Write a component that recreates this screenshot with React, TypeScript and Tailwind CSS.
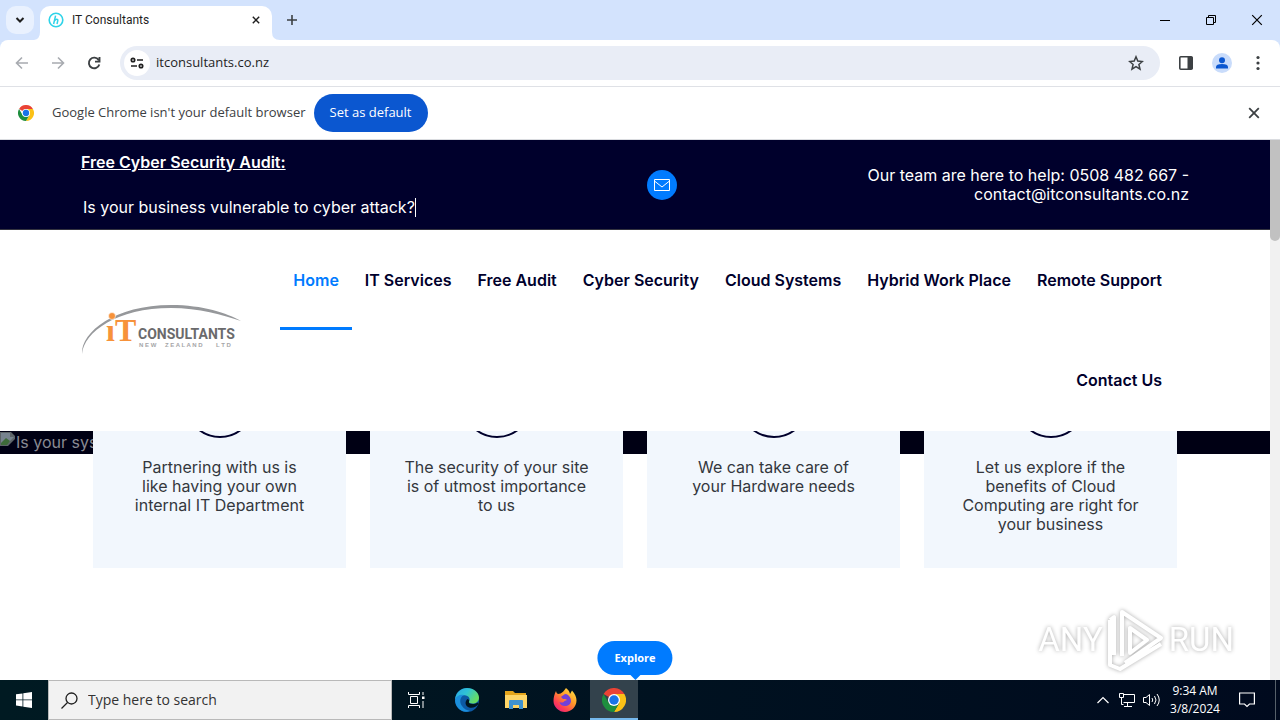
import { useState } from "react";

const siteFont = "font-[Inter,'Liberation_Sans',sans-serif]";
const uiFont = "font-['Open_Sans','Noto_Sans',sans-serif]";

const navLinks = [
  "Home",
  "IT Services",
  "Free Audit",
  "Cyber Security",
  "Cloud Systems",
  "Hybrid Work Place",
  "Remote Support",
  "Contact Us",
];

const cards = [
  "Partnering with us is\nlike having your own\ninternal IT Department",
  "The security of your site\nis of utmost importance\nto us",
  "We can take care of\nyour Hardware needs",
  "Let us explore if the\nbenefits of Cloud\nComputing are right for\nyour business",
];

const ChromeLogo = ({ className }: { className?: string }) => (
  <svg viewBox="0 0 48 48" className={className} aria-hidden="true">
    <path d="M24 24 3.2 12A24 24 0 0 1 44.8 12Z" fill="#ea4335" />
    <path d="M24 12H44.8A24 24 0 0 1 24 48L34.4 30Z" fill="#fbc116" />
    <path d="M3.2 12 13.6 30 24 36 34.4 30 24 48A24 24 0 0 1 3.2 12Z" fill="#1e8e3e" />
    <circle cx="24" cy="24" r="12" fill="#fff" />
    <circle cx="24" cy="24" r="9.5" fill="#1a73e8" />
  </svg>
);

const CloseIcon = ({ className }: { className?: string }) => (
  <svg viewBox="0 0 10 10" className={className} fill="none" stroke="currentColor" aria-hidden="true">
    <path d="m1 1 8 8M9 1 1 9" />
  </svg>
);

const TabStrip = () => (
  <div className="flex h-10 shrink-0 items-end bg-[#d3e3fd]">
    <button aria-label="Search tabs" className="mb-1.5 ml-1.5 flex size-7 items-center justify-center rounded-[10px] bg-[#e9f1fe]">
      <svg viewBox="0 0 10 10" className="size-2.5" fill="none" stroke="#1f1f1f" strokeWidth="2" aria-hidden="true">
        <path d="m1.5 3 3.5 3.5L8.5 3" />
      </svg>
    </button>
    <svg viewBox="0 0 6 8" className="h-2 w-1.5" fill="#fff" aria-hidden="true">
      <path d="M6 0v8H0q6-1 6-8" />
    </svg>
    <div className="flex h-[34px] w-[232px] items-center rounded-t-[10px] bg-white pr-2.5 pl-2 pb-1.5">
      <svg viewBox="0 0 16 16" className="size-4" fill="none" stroke="#2fd3e8" aria-hidden="true">
        <circle cx="8" cy="8" r="6.8" strokeWidth="1.6" />
        <path d="M7.6 3.6 5.6 12M6.4 9c1-2 3.8-2.6 3.4-.4L9 12" strokeWidth="1.5" />
      </svg>
      <span className="ml-2 flex-1 font-[Roboto,sans-serif] text-xs text-[#1f1f1f]">IT Consultants</span>
      <button aria-label="Close tab" className="p-0.5 text-[#1f1f1f]">
        <CloseIcon className="size-2 stroke-[1.8]" />
      </button>
    </div>
    <svg viewBox="0 0 8 8" className="size-2" fill="#fff" aria-hidden="true">
      <path d="M0 0v8h8Q0 8 0 0" />
    </svg>
    <button aria-label="New tab" className="mb-3.5 ml-1.5">
      <svg viewBox="0 0 12 12" className="size-3" stroke="#3c4043" strokeWidth="1.6" aria-hidden="true">
        <path d="M6 1v10M1 6h10" />
      </svg>
    </button>
    <div className="ml-auto flex h-10 items-center text-black">
      <button aria-label="Minimize" className="flex w-[46px] justify-center">
        <svg viewBox="0 0 10 10" className="size-2.5" stroke="currentColor" shapeRendering="crispEdges" aria-hidden="true">
          <path d="M0 5.5h10" />
        </svg>
      </button>
      <button aria-label="Restore" className="flex w-[46px] justify-center">
        <svg viewBox="0 0 10 10" className="size-2.5" fill="none" stroke="currentColor" aria-hidden="true">
          <path d="M.5 2.5h7v7h-7zM2.5 2.5v-2h7v7h-2" />
        </svg>
      </button>
      <button aria-label="Close" className="flex w-[46px] justify-center">
        <CloseIcon className="size-3 stroke-1" />
      </button>
    </div>
  </div>
);

const Toolbar = () => (
  <div className="bg-[#d3e3fd]">
    <div className="flex h-[47px] items-center rounded-t-lg border-b border-[#dfe1e6] bg-white pl-[15px] pr-3">
      <button aria-label="Back">
        <svg viewBox="0 0 14 14" className="size-3.5" fill="none" stroke="#a8abb0" strokeWidth="1.6" aria-hidden="true">
          <path d="M13 7H2M7 1.5 1.5 7 7 12.5" />
        </svg>
      </button>
      <button aria-label="Forward" className="ml-[22px]">
        <svg viewBox="0 0 14 14" className="size-3.5" fill="none" stroke="#a8abb0" strokeWidth="1.6" aria-hidden="true">
          <path d="M1 7h11M7 1.5 12.5 7 7 12.5" />
        </svg>
      </button>
      <button aria-label="Reload" className="ml-[22px]">
        <svg viewBox="0 0 14 14" className="size-3.5" fill="none" stroke="#3c4043" strokeWidth="1.9" aria-hidden="true">
          <path d="M11.6 4A5.3 5.3 0 1 0 12.3 8.4M12.5 1v4.6H8" />
        </svg>
      </button>
      <div className="ml-[19px] flex h-[34px] flex-1 items-center rounded-full bg-[#e9edf6] pr-4 pl-1">
        <button aria-label="View site information" className="flex size-[26px] items-center justify-center rounded-full bg-white">
          <svg viewBox="0 0 14 12" className="h-3 w-3.5" fill="none" stroke="#1f1f1f" strokeWidth="1.7" aria-hidden="true">
            <circle cx="3" cy="3" r="1.7" />
            <path d="M7 3h6M1 9h6" />
            <circle cx="11" cy="9" r="1.7" />
          </svg>
        </button>
        <input aria-label="Address" defaultValue="itconsultants.co.nz" className="ml-1.5 min-w-0 flex-1 bg-transparent text-[13px] text-[#1f1f1f] outline-none" />
        <button aria-label="Bookmark this tab">
          <svg viewBox="0 0 16 16" className="size-4" fill="none" stroke="#3c4043" strokeWidth="1.5" aria-hidden="true">
            <path d="m8 1.8 1.8 4.3 4.6.4-3.5 3 1.1 4.6L8 11.6l-4 2.5 1.1-4.6-3.5-3 4.6-.4z" />
          </svg>
        </button>
      </div>
      <button aria-label="Side panel" className="ml-[19px]">
        <svg viewBox="0 0 14 14" className="size-3.5" aria-hidden="true">
          <rect x=".8" y=".8" width="12.4" height="12.4" rx="1" fill="none" stroke="#3c4043" strokeWidth="1.6" />
          <path d="M8.5 1h5v12h-5z" fill="#3c4043" />
        </svg>
      </button>
      <button aria-label="Profile" className="ml-[19px]">
        <svg viewBox="0 0 20 20" className="size-5" aria-hidden="true">
          <circle cx="10" cy="10" r="10" fill="#c9dcfb" />
          <circle cx="10" cy="7.2" r="3" fill="#0b57d0" />
          <path d="M4 15.5V14q0-3 6-3t6 3v1.5z" fill="#0b57d0" />
        </svg>
      </button>
      <button aria-label="Menu" className="ml-4">
        <svg viewBox="0 0 20 20" className="size-5" fill="#3c4043" aria-hidden="true">
          <circle cx="10" cy="4.5" r="1.6" />
          <circle cx="10" cy="10" r="1.6" />
          <circle cx="10" cy="15.5" r="1.6" />
        </svg>
      </button>
    </div>
  </div>
);

const InfoBar = () => (
  <div className="flex h-[53px] shrink-0 items-center border-b border-[#dadce0] bg-white pr-5 pl-[18px]">
    <ChromeLogo className="size-4" />
    <span className="ml-[18px] text-[13px] text-[#3c4043]">Google Chrome isn't your default browser</span>
    <button className="ml-2 h-[38px] rounded-full bg-[#0b57d0] px-4 text-[13px] text-white">Set as default</button>
    <button aria-label="Dismiss" className="ml-auto text-[#3c4043]">
      <CloseIcon className="size-3 stroke-[1.5]" />
    </button>
  </div>
);

const TopBar = () => (
  <div className="border-b border-[#33333f] bg-[#00002c] text-white">
    <div className="mx-auto flex h-[89px] max-w-[1108px] items-center justify-between">
      <div className="flex w-[396px] flex-col gap-[26px] leading-[19px]">
        <a href="#audit" className="font-semibold underline">Free Cyber Security Audit:</a>
        <p className="flex pl-0.5">
          Is your business vulnerable to cyber attack?
          <span className="w-px bg-white" />
        </p>
      </div>
      <a href="#mail" aria-label="Email us" className="flex size-[30px] items-center justify-center rounded-full bg-[#007bff]">
        <svg viewBox="0 0 16 12" className="h-3 w-4" fill="none" stroke="#fff" aria-hidden="true">
          <path d="M.5.5h15v11H.5zM.5 2 8 8l7.5-6" />
        </svg>
      </a>
      <p className="w-[342px] text-right leading-[19px]">
        Our team are here to help: 0508 482 667 -<br />
        contact@itconsultants.co.nz
      </p>
    </div>
  </div>
);

const Logo = () => (
  <svg viewBox="0 0 162 52" className="h-[52px] w-[162px] shrink-0" role="img" aria-label="iT Consultants New Zealand Ltd">
    <path d="M1 50C0 28 34 1 90 1c32 0 56 8 70 16C142 11 118 4 90 4 36 4 3 28 1 50" fill="#96989b" />
    <g className="font-['Liberation_Serif',serif]" fontSize="32" fontWeight="700" fill="#f7923a">
      <text x="25" y="37">ı</text>
      <text x="34" y="37">T</text>
    </g>
    <circle cx="31" cy="12" r="3.5" fill="#f7923a" stroke="#fff" strokeWidth=".6" />
    <text x="57" y="35" fontSize="14" fontWeight="700" fill="#6a6a6c" className="font-[Roboto,sans-serif]">CONSULTANTS</text>
    <g className="font-['Liberation_Sans',sans-serif]" fontSize="6" fontWeight="700" fill="#a5a5a7">
      <text x="58" y="43">N E W</text>
      <text x="84" y="43">Z E A L A N D</text>
      <text x="135" y="43">L T D</text>
    </g>
  </svg>
);

const Header = () => {
  const [active, setActive] = useState("Home");
  return (
    <header className="bg-white">
      <div className="mx-auto flex max-w-[1108px] items-center justify-between pb-px">
        <Logo />
        <nav className="flex flex-1 flex-wrap justify-end pr-3.5">
          {navLinks.map((link) => (
            <a
              key={link}
              href="#page"
              onClick={() => setActive(link)}
              className={`flex h-[100px] items-center border-b-[3px] px-[13px] pt-[3px] font-semibold ${
                active === link ? "border-[#007bff] text-[#007bff]" : "border-transparent text-[#00002c]"
              }`}
            >
              {link}
            </a>
          ))}
        </nav>
      </div>
    </header>
  );
};

const Services = () => (
  <main>
    <div className="flex h-[23px] items-start overflow-hidden bg-[#000014] text-[#8a8a92]">
      <svg viewBox="0 0 16 16" className="size-4" aria-hidden="true">
        <path d="M0 1h11l4 4v3l-7 7H0z" fill="#5d6468" />
        <path d="M1 2h9v4h4L7 13H1z" fill="#77838f" />
        <path d="m1 12 5-5 4 3-3 4H1z" fill="#3e6b3a" />
      </svg>
      <span className="leading-[22px]">Is your system secure?</span>
    </div>
    <div className="relative mx-auto -mt-[23px] grid max-w-[1108px] grid-cols-4 gap-6 px-3">
      {cards.map((text) => (
        <article key={text} className="overflow-hidden bg-[#f2f7fd] pb-[34px] text-center">
          <div className="mx-auto -mt-[63px] size-[70px] rounded-full border-2 border-[#00002c]" />
          <p className="mt-5 whitespace-pre-line leading-[19px] text-[#34373d]">{text}</p>
        </article>
      ))}
    </div>
  </main>
);

const Watermark = () => (
  <div className="absolute right-9 bottom-2 flex items-center gap-1 font-[Roboto,sans-serif] text-[33px] text-white drop-shadow-[0_0_2px_#aaa]">
    <span>ANY</span>
    <svg viewBox="0 0 58 64" className="h-16 w-[58px]" fill="none" stroke="#fff" strokeWidth="4" strokeLinejoin="round" aria-hidden="true">
      <path d="M15 48V4l39 26-36 25M3 12v45l10 4 41-25M23 20v25l17-13zM3 12l4-3v38" />
    </svg>
    <span>RUN</span>
  </div>
);

const Explore = () => (
  <div className="absolute bottom-0 left-1/2 flex -translate-x-1/2 flex-col items-center">
    <button className="h-[34px] rounded-full bg-[#007bff] px-[17px] text-[11px] font-bold text-white">Explore</button>
    <svg viewBox="0 0 12 6" className="-mt-px h-1.5 w-3" fill="#007bff" aria-hidden="true">
      <path d="M0 0h12L6 6z" />
    </svg>
  </div>
);

const Taskbar = () => (
  <footer className="flex h-10 shrink-0 items-stretch bg-linear-to-r from-[#001a22] to-[#000a1e] text-white">
    <button aria-label="Start" className="flex w-12 items-center justify-center">
      <svg viewBox="0 0 16 16" className="size-4" fill="#fff" aria-hidden="true">
        <path d="M0 2.3 6.5 1.4v6.1H0zM7.3 1.3 16 0v7.5H7.3zM0 8.3h6.5v6.2L0 13.6zM7.3 8.3H16V16l-8.7-1.3z" />
      </svg>
    </button>
    <label className="flex w-[344px] items-center border border-[#b9b9b9] bg-[#f2f2f2] pl-3">
      <svg viewBox="0 0 17 17" className="size-[17px]" fill="none" stroke="#1f1f1f" strokeWidth="1.3" aria-hidden="true">
        <circle cx="10.5" cy="6.5" r="5.5" />
        <path d="M6.5 10.5.5 16.5" />
      </svg>
      <input aria-label="Search" placeholder="Type here to search" className="ml-2.5 min-w-0 flex-1 bg-transparent text-sm outline-none placeholder:text-[#333]" />
    </label>
    <button aria-label="Task view" className="flex w-12 items-center justify-center">
      <svg viewBox="0 0 17 16" className="h-4 w-[17px]" fill="none" stroke="#fff" aria-hidden="true">
        <path d="M.5 0v2.500h11V0M.5 16v-2.500h11V16M2.500 4.500h7v7h-7zM15 0v3M15 9v7" />
        <path d="M14 4.500h2.500v2.500H14z" fill="#fff" stroke="none" />
      </svg>
    </button>
    <button aria-label="Microsoft Edge" className="ml-0.5 flex w-[50px] items-center justify-center">
      <svg viewBox="0 0 24 24" className="size-6" aria-hidden="true">
        <defs>
          <linearGradient id="edge-top" x1="0" x2="1" y1="0" y2=".5">
            <stop offset="0" stopColor="#2aa5e4" />
            <stop offset=".5" stopColor="#2fc3d6" />
            <stop offset="1" stopColor="#66dc62" />
          </linearGradient>
        </defs>
        <circle cx="12" cy="12" r="12" fill="#0c59a4" />
        <path d="M0 11.5C1 4 6 0 12 0c7 0 12 5 12 9.5 0 4-3 6-6.5 6-3 0-4-1-3.500-2 1.500-2 .5-5-3-6C7 6.500 2 8 0 11.500" fill="url(#edge-top)" />
        <path d="M0 12c1-4 5-6 9-5-4 2-5 7-2 11 2 3 5 4.500 8 4.800C8 26 0 20 0 12" fill="#1b8fdc" />
        <path d="M14 13.500c-.5 1 .5 2.500 3.500 2.500 2 0 3.500-.5 5-1.500l1 1.500c-2 3-6 4.500-9.500 3.500-4-1.500-4.500-6-1.500-8.500 1.500.5 2 1.500 1.500 2.500" fill="#001620" />
      </svg>
    </button>
    <button aria-label="File Explorer" className="flex w-12 items-center justify-center">
      <svg viewBox="0 0 22 20" className="h-5 w-[22px]" aria-hidden="true">
        <path d="M0 1h8l2 2h11v5H0z" fill="#e5a51b" />
        <path d="M0 5h22v13H0z" fill="#ffd667" />
        <path d="M4 11q0-1 1-1h12q1 0 1 1v8h-4v-4H8v4H4z" fill="#3f92cf" />
      </svg>
    </button>
    <button aria-label="Firefox" className="flex w-[50px] items-center justify-center">
      <svg viewBox="0 0 24 24" className="size-6" aria-hidden="true">
        <defs>
          <linearGradient id="fox" x1="1" x2=".2" y1="0" y2="1">
            <stop offset="0" stopColor="#fff04a" />
            <stop offset=".45" stopColor="#ff9a28" />
            <stop offset=".8" stopColor="#ff3b55" />
            <stop offset="1" stopColor="#e3237f" />
          </linearGradient>
        </defs>
        <path d="M3 3c.3 1.500 1 2.500 2 3l2.500-.5C9 5 11 3 13 0c2.500 2 3.500 3.500 4 6l2-3.500c3 3.500 4.500 6.500 4.500 10C23.500 19 18 24 12 24S.5 19 .5 13C.5 9 1.500 6 3 3" fill="url(#fox)" />
        <path d="M8 9c1.500-1 3-3 5-3 3 1 5 4 5 7 0 3-3 5-6 5s-5-1.500-5.500-4c1.500 1 4 .8 5-1L14 12c-1.500-1.500-3-1-4-1z" fill="#7140d8" />
      </svg>
    </button>
    <button aria-label="Google Chrome" className="flex w-12 items-center justify-center border-b-2 border-[#76b9ed] bg-[#33424c] pt-0.5">
      <ChromeLogo className="size-6" />
    </button>
    <div className="ml-auto flex items-center">
      <button aria-label="Show hidden icons">
        <svg viewBox="0 0 12 8" className="h-2 w-3" fill="none" stroke="#fff" strokeWidth="1.2" aria-hidden="true">
          <path d="m.5 7 5.500-5.500L11.500 7" />
        </svg>
      </button>
      <svg viewBox="0 0 16 14" className="ml-2.5 h-3.5 w-4" fill="none" stroke="#fff" aria-hidden="true">
        <path d="M5 1.500h10.500v8H4.500M8.500 10v3M5 13.500h8M.5.5h4v4h-4zM2.500 4.500v7h2" />
      </svg>
      <svg viewBox="0 0 17 14" className="ml-2 h-3.5 w-[17px]" fill="none" stroke="#fff" aria-hidden="true">
        <path d="M.5 4.500H3l3.500-3v11L3 9.500H.5zM9 5q1.500 2 0 4M11.500 3q3 4 0 8M14 1q4.500 6 0 12" />
      </svg>
      <div className="ml-[7px] w-14 text-center text-xs leading-[18px]">
        <div>9:34 AM</div>
        <div>3/8/2024</div>
      </div>
      <button aria-label="Notifications" className="ml-4">
        <svg viewBox="0 0 16 16" className="size-4" fill="none" stroke="#fff" strokeWidth="1.2" aria-hidden="true">
          <path d="M.6 1h14.800v11H10.500L8 14.500 5.500 12H.6z" />
        </svg>
      </button>
      <div className="ml-5 h-10 w-[5px] border-l border-[#56606a]" />
    </div>
  </footer>
);

const App = () => {
  return (
    <div className={`flex h-screen flex-col overflow-hidden bg-white ${uiFont}`}>
      <TabStrip />
      <Toolbar />
      <InfoBar />
      <div className="relative flex min-h-0 flex-1">
        <div className={`min-w-0 flex-1 overflow-hidden ${siteFont}`}>
          <TopBar />
          <Header />
          <Services />
        </div>
        <div className="w-2.5 bg-[#f1f1f1]">
          <div className="h-[101px] rounded-b-full bg-[#c1c1c1]" />
        </div>
        <div className="pointer-events-none absolute inset-y-0 right-2.5 left-0">
          <Explore />
          <Watermark />
        </div>
      </div>
      <Taskbar />
    </div>
  );
};

export default App;
